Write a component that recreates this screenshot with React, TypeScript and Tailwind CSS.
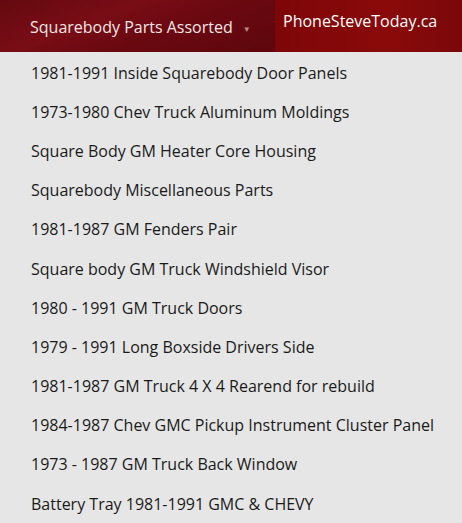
import React from 'react';

const parts = [
    '1981-1991 Inside Squarebody Door Panels',
    '1973-1980 Chev Truck Aluminum Moldings',
    'Square Body GM Heater Core Housing',
    'Squarebody Miscellaneous Parts',
    '1981-1987 GM Fenders Pair',
    'Square body GM Truck Windshield Visor',
    '1980 - 1991 GM Truck Doors',
    '1979 - 1991 Long Boxside Drivers Side',
    '1981-1987 GM Truck 4 X 4 Rearend for rebuild',
    '1984-1987 Chev GMC Pickup Instrument Cluster Panel',
    '1973 - 1987 GM Truck Back Window',
    'Battery Tray 1981-1991 GMC & CHEVY',
];

export default function App() {
    return (
        <div className="w-[462px] h-[523px] overflow-hidden bg-[#e6e6e6] font-['Open_Sans',sans-serif]">
            {/* Top bar */}
            <div className="h-[52px] flex bg-[#7a0a0d]">
                <div className="w-[275px] flex items-center pl-[30px] pt-[2px] bg-[linear-gradient(160deg,#650910_0%,#780d15_35%,#6a0810_60%,#5e070d_100%)]">
                    <span className="text-[16px] text-[#f3e6e6]">Squarebody Parts Assorted</span>
                    <span className="ml-[10px] mt-[3px] text-[8px] text-[#b98a8c]">▼</span>
                </div>
                <div className="flex-1 flex items-start pt-[9px] pl-[8px] bg-[linear-gradient(90deg,#7e0607_0%,#8a0a0a_60%,#7a0809_100%)]">
                    <span className="text-[16px] text-white">PhoneSteveToday.ca</span>
                </div>
            </div>

            {/* Category list */}
            <ul className="pt-[1px]">
                {parts.map((p) => (
                    <li key={p} className="h-[39.2px] flex items-center pl-[31px] text-[16px] text-[#1a1a1a]">
                        {p}
                    </li>
                ))}
            </ul>
        </div>
    );
}
